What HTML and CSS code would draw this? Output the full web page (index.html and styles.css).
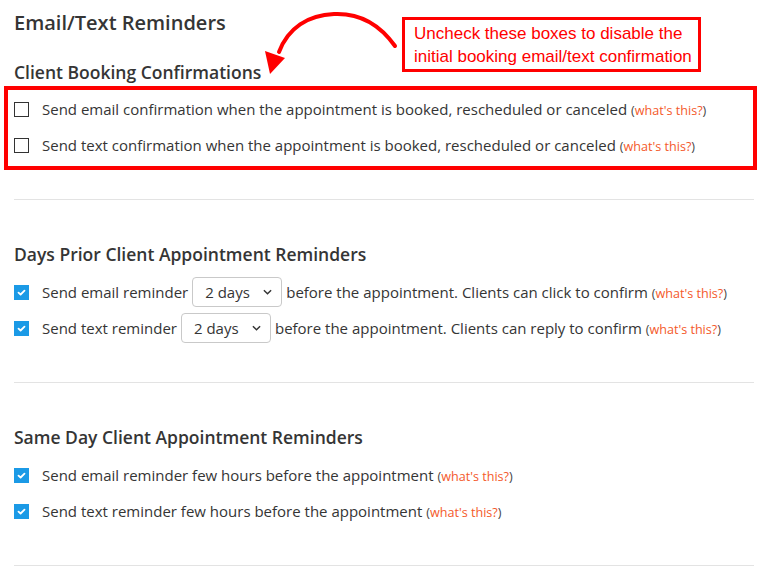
FILE: index.html
```html
<!DOCTYPE html>
<html>
<head>
<meta charset="utf-8">
<link rel="stylesheet" href="styles.css">
</head>
<body>
<div class="page">
  <h1 class="title">Email/Text Reminders</h1>
  <h2 class="heading">Client Booking Confirmations</h2>
  <div class="highlight">
    <div class="row"><span class="cb"></span><span class="label">Send email confirmation when the appointment is booked, rescheduled or canceled <span class="help">(<a>what's this?</a>)</span></span></div>
    <div class="row"><span class="cb"></span><span class="label">Send text confirmation when the appointment is booked, rescheduled or canceled <span class="help">(<a>what's this?</a>)</span></span></div>
  </div>
  <hr class="sep first">

  <h2 class="heading sec">Days Prior Client Appointment Reminders</h2>
  <div class="row"><span class="cb on"><svg viewBox="0 0 15 15"><path d="M4.5 7.6 L6.6 9.5 L10.5 5.6" fill="none" stroke="#fff" stroke-width="1.8" stroke-linecap="round" stroke-linejoin="round"/></svg></span><span class="label">Send email reminder</span><span class="select">2 days<svg viewBox="0 0 10 6"><path d="M1 1 L5 5 L9 1" fill="none" stroke="#333" stroke-width="1.6"/></svg></span><span class="label">before the appointment. Clients can click to confirm <span class="help">(<a>what's this?</a>)</span></span></div>
  <div class="row"><span class="cb on"><svg viewBox="0 0 15 15"><path d="M4.5 7.6 L6.6 9.5 L10.5 5.6" fill="none" stroke="#fff" stroke-width="1.8" stroke-linecap="round" stroke-linejoin="round"/></svg></span><span class="label">Send text reminder</span><span class="select">2 days<svg viewBox="0 0 10 6"><path d="M1 1 L5 5 L9 1" fill="none" stroke="#333" stroke-width="1.6"/></svg></span><span class="label">before the appointment. Clients can reply to confirm <span class="help">(<a>what's this?</a>)</span></span></div>
  <hr class="sep">

  <h2 class="heading sec">Same Day Client Appointment Reminders</h2>
  <div class="row"><span class="cb on"><svg viewBox="0 0 15 15"><path d="M4.5 7.6 L6.6 9.5 L10.5 5.6" fill="none" stroke="#fff" stroke-width="1.8" stroke-linecap="round" stroke-linejoin="round"/></svg></span><span class="label">Send email reminder few hours before the appointment <span class="help">(<a>what's this?</a>)</span></span></div>
  <div class="row"><span class="cb on"><svg viewBox="0 0 15 15"><path d="M4.5 7.6 L6.6 9.5 L10.5 5.6" fill="none" stroke="#fff" stroke-width="1.8" stroke-linecap="round" stroke-linejoin="round"/></svg></span><span class="label">Send text reminder few hours before the appointment <span class="help">(<a>what's this?</a>)</span></span></div>
  <hr class="sep">

  <div class="callout">Uncheck these boxes to disable the<br>initial booking email/text confirmation</div>
  <svg class="arrow" width="140" height="70" viewBox="260 8 140 70">
    <path d="M395,46 C378,22 356,13 334,14 C308,15 288,28 279,52" fill="none" stroke="#f00" stroke-width="4" stroke-linecap="round"/>
    <polygon points="265,51 285,58 270,74" fill="#f00"/>
  </svg>
</div>
</body>
</html>
```

FILE: styles.css
```css
html, body {
  margin: 0;
  padding: 0;
  background: #fff;
}
.page {
  position: relative;
  width: 740px;
  padding: 9px 12px 0 14px;
  font-family: "Open Sans", Lato, sans-serif;
  color: #353535;
}
.title {
  margin: 0;
  font-size: 20px;
  line-height: 28px;
  font-weight: 600;
}
.heading {
  margin: 23px 0 2px;
  font-size: 17.5px;
  line-height: 24px;
  font-weight: 600;
}
.heading.sec {
  margin: 42px 0 8px;
}
.highlight {
  margin: 0 -3px 0 -10px;
  border: 4px solid #f00;
  padding: 1px 0 3px 6px;
}
.row {
  display: flex;
  align-items: center;
  height: 36px;
  font-size: 15px;
  white-space: nowrap;
}
.cb {
  flex: none;
  box-sizing: border-box;
  width: 15px;
  height: 15px;
  border: 1.5px solid #333;
  background: #fff;
  margin-right: 13px;
}
.cb.on {
  border: none;
  background: #1b9ae6;
}
.cb svg {
  display: block;
  width: 15px;
  height: 15px;
}
.help {
  font-size: 12.6px;
  color: #444;
}
.help a {
  color: #f4592a;
}
.select {
  display: inline-flex;
  align-items: center;
  justify-content: space-between;
  box-sizing: border-box;
  width: 90px;
  height: 30px;
  margin: 0 4px 0 4px;
  padding: 0 9px 0 12px;
  border: 1px solid #c9c9c9;
  border-radius: 4px;
  background: #fff;
}
.select svg {
  width: 9px;
  height: 6px;
}
.sep {
  margin: 36px 0 0;
  border: none;
  border-top: 1px solid #e3e3e3;
  height: 0;
}
.sep.first {
  margin-top: 29px;
}
.callout {
  position: absolute;
  left: 402px;
  top: 17px;
  box-sizing: border-box;
  width: 299px;
  height: 55px;
  border: 3px solid #f00;
  padding: 2px 0 0 9px;
  font-family: "Liberation Sans", Arial, sans-serif;
  font-size: 17px;
  line-height: 23px;
  color: #f00;
  background: #fff;
}
.arrow {
  position: absolute;
  left: 260px;
  top: 8px;
}
```
